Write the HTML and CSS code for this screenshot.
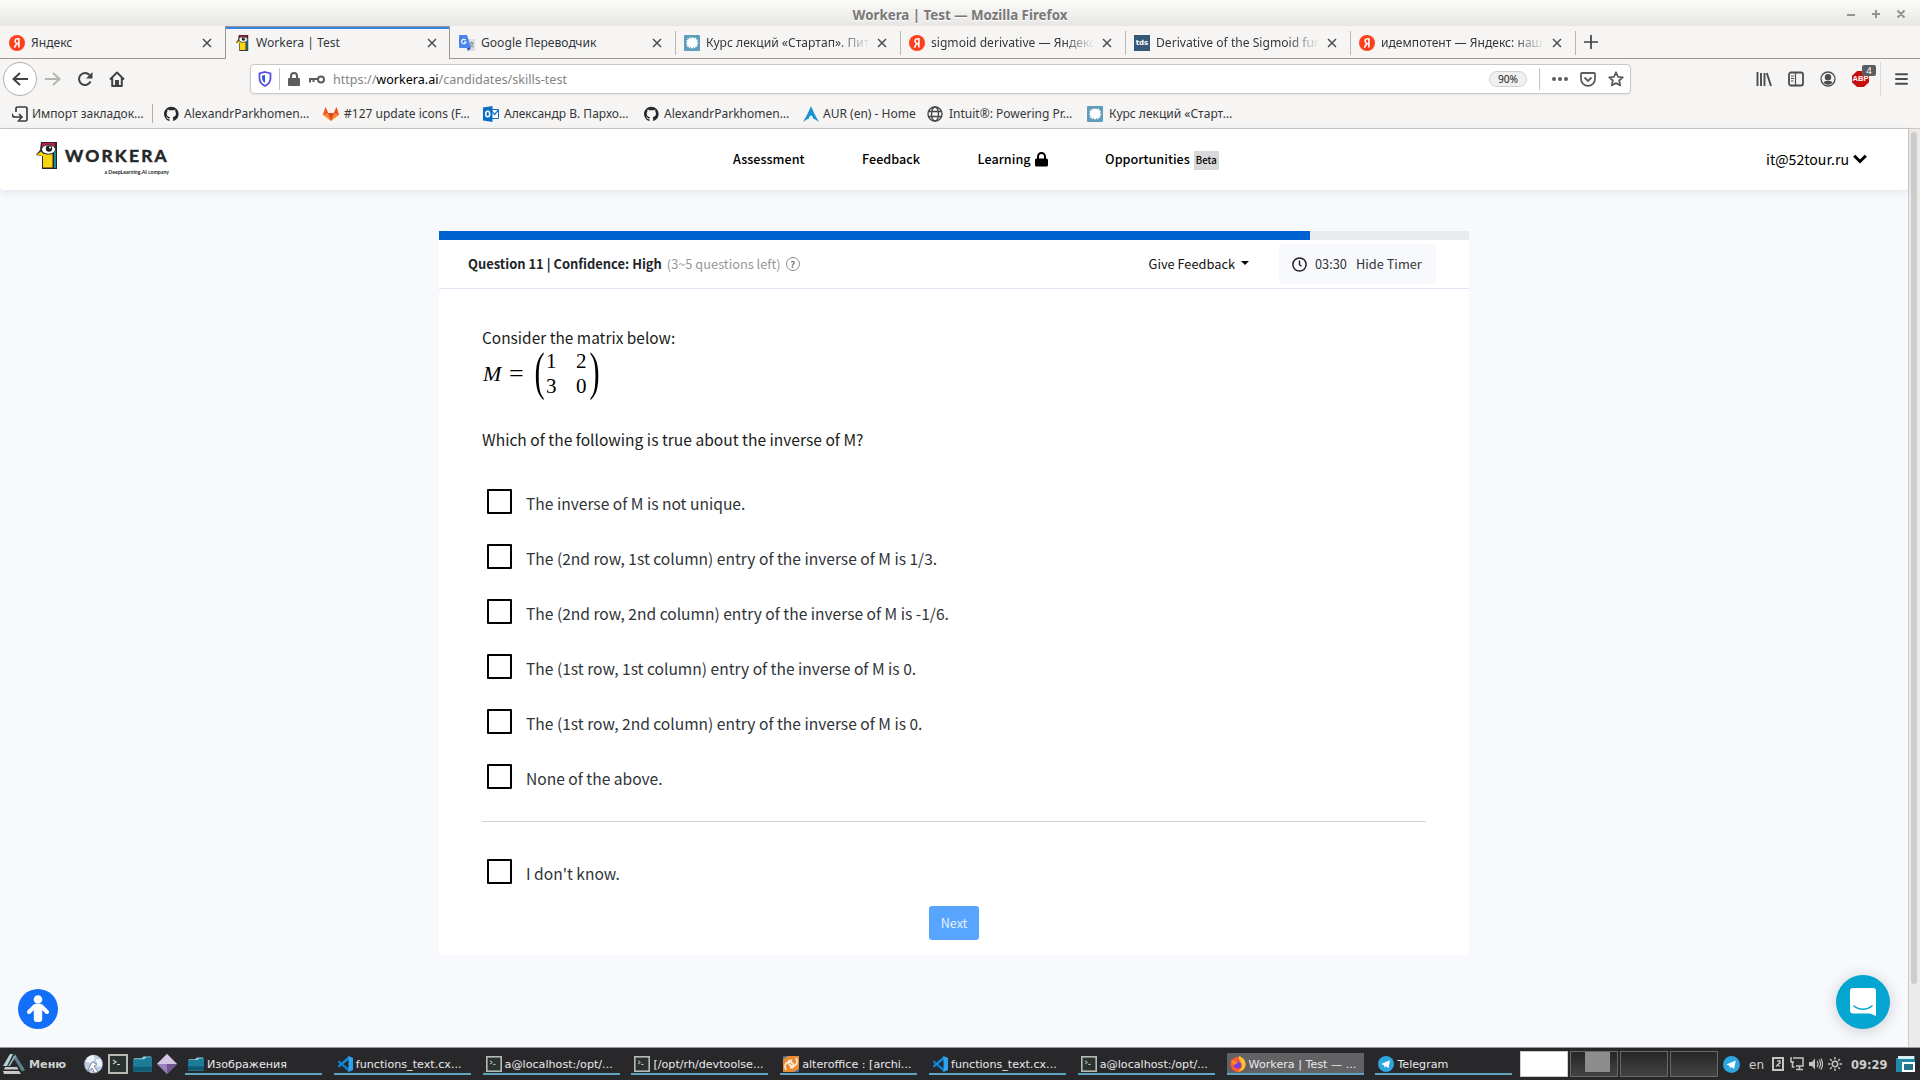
FILE: index.html
```html
<!DOCTYPE html>
<html lang="ru">
<head>
<meta charset="utf-8">
<title>Workera | Test</title>
<link rel="stylesheet" href="styles.css">
</head>
<body>
<svg class="defs" width="0" height="0">
  <symbol id="yandex" viewBox="0 0 16 16"><circle cx="8" cy="8" r="8" fill="#fc3f1d"/><path d="M9.900 12.600V3.700H8.600c-1.600 0-2.500.8-2.500 2.200 0 1.200.6 1.800 1.600 2.500L5.400 12.600M9.900 8.900H8.300" fill="none" stroke="#fff" stroke-width="1.600"/></symbol>
  <symbol id="bird" viewBox="0 0 21 27"><path d="M5 0h16v27H6V14L0 13l4-5z" fill="#23262b"/><path d="M6 1h13v4H6z" fill="#d6173c"/><path d="M7 12h9.500v13.500H7z" fill="#fbd50b"/><path d="M1 12.500l4-3 3 3v2z" fill="#fbd50b"/><path d="M18 6h2v20h-2z" fill="#1f8a90"/><ellipse cx="12.500" cy="7.500" rx="7" ry="4.700" fill="#fff" stroke="#23262b"/><circle cx="13" cy="6.500" r="3.200" fill="#222"/><circle cx="14" cy="5.600" r="1" fill="#fff"/></symbol>
  <symbol id="translate" viewBox="0 0 16 16"><path d="M6 4h10v12H8z" fill="#dadce0"/><path d="M1 0h7l4 13H1a1 1 0 0 1-1-1V1a1 1 0 0 1 1-1z" fill="#4a86ee"/><path d="M8 13h4l-3 3z" fill="#3055b8"/><path d="M6.600 5.200A2.200 2.200 0 1 0 7 7H5" fill="none" stroke="#fff" stroke-width="1.100"/><path d="M10.500 8h4M12.500 7v1M14 8c-.4 2-1.500 3-3 4M11.500 9.500l3 2.800" fill="none" stroke="#777f89"/></symbol>
  <symbol id="splat" viewBox="0 0 16 16"><rect width="16" height="16" rx="1" fill="#5f9dbd"/><path d="M3 3l2 1 1-2 1.500 1.500L9 2l1 1.500L12 2.500l.3 2L14 5l-1 2 1.500 1.500L13 9.500l.5 2-2 .3-.5 2L9.500 12 8 14l-1.300-2L5 13.500l-.3-2-2.200.3 1-2L2 8.500 3.300 7 2 5.500l2-.5z" fill="#fff"/></symbol>
  <symbol id="close" viewBox="0 0 10 10"><path d="M1 1l8 8M9 1L1 9" fill="none" stroke="#4a4d50" stroke-width="1.500"/></symbol>
  <symbol id="github" viewBox="0 -.5 17.500 17"><path fill="#24292e" d="M8 0C3.580 0 0 3.580 0 8c0 3.540 2.290 6.530 5.470 7.590.4.070.550-.170.550-.380 0-.190-.010-.820-.010-1.490-2.010.370-2.530-.490-2.690-.940-.090-.230-.480-.940-.820-1.130-.280-.150-.680-.520-.010-.530.630-.010 1.080.580 1.230.820.720 1.210 1.870.870 2.330.660.070-.520.280-.870.510-1.070-1.780-.2-3.640-.890-3.640-3.950 0-.870.310-1.590.820-2.150-.080-.2-.360-1.020.080-2.120 0 0 .670-.210 2.200.820.640-.180 1.320-.270 2-.270s1.360.090 2 .270c1.530-1.040 2.200-.820 2.200-.820.440 1.100.160 1.920.080 2.120.510.560.820 1.270.820 2.150 0 3.070-1.870 3.750-3.650 3.950.290.250.540.730.540 1.480 0 1.070-.010 1.930-.010 2.200 0 .210.150.460.550.380A8.010 8.010 0 0 0 16 8c0-4.420-3.580-8-8-8z"/></symbol>
  <symbol id="folder" viewBox="0 0 20 20"><path d="M1 4h8l2-2h8v16H1z" fill="#8fd0e2"/><path d="M0 5h12l2-2h6v15H0z" fill="#1d7b98"/><path d="M0 13h20v5H0z" fill="#0f5a75"/></symbol>
  <symbol id="term" viewBox="0 0 20 20"><rect x="1" y="1" width="18" height="18" fill="#2b3331" stroke="#b9b9b4" stroke-width="2"/><path d="M5 6l3 2-3 2M9 10.500h3" fill="none" stroke="#c9d2cf" stroke-width="1.200"/></symbol>
  <symbol id="code" viewBox="0 0 16 16"><path d="M1 5.200l1.200-.8L12 12.500V16L1 6.500z" fill="#0f7cc9"/><path d="M1 10.800l1.200.8L12 3.500V0L1 9.500z" fill="#1487d4"/><path d="M11.500 0L16 2v12l-4.500 2z" fill="#2aa3f1"/></symbol>
  <symbol id="tg" viewBox="0 0 18 18"><circle cx="9" cy="9" r="9" fill="#2ca5e0"/><path d="M3.500 9l10-4.200-1.700 9-3-2.200-1.500 1.500-.4-2.800z" fill="#fff"/></symbol>
</svg>

<header class="titlebar">
  <span class="titlebar-text">Workera | Test — Mozilla Firefox</span>
  <svg class="win-buttons" width="60" height="12" viewBox="0 0 60 12"><path d="M1 7h8M26 6h8M30 2v8M51.500 2.500l7 7M58.500 2.500l-7 7" fill="none" stroke="#939391" stroke-width="2"/></svg>
</header>

<div class="tabs">
  <div class="tab first"><svg class="fav"><use href="#yandex"/></svg><span class="tab-title">Яндекс</span><svg class="x"><use href="#close"/></svg></div>
  <div class="tab active"><svg class="fav"><use href="#bird"/></svg><span class="tab-title">Workera | Test</span><svg class="x"><use href="#close"/></svg></div>
  <div class="tab"><svg class="fav"><use href="#translate"/></svg><span class="tab-title">Google Переводчик</span><svg class="x"><use href="#close"/></svg></div>
  <div class="tab sep"><svg class="fav"><use href="#splat"/></svg><span class="tab-title fade">Курс лекций «Стартап». Пит</span><svg class="x"><use href="#close"/></svg></div>
  <div class="tab sep"><svg class="fav"><use href="#yandex"/></svg><span class="tab-title fade">sigmoid derivative — Яндекс</span><svg class="x"><use href="#close"/></svg></div>
  <div class="tab sep"><span class="fav tds">tds</span><span class="tab-title fade">Derivative of the Sigmoid fun</span><svg class="x"><use href="#close"/></svg></div>
  <div class="tab sep"><svg class="fav"><use href="#yandex"/></svg><span class="tab-title fade">идемпотент — Яндекс: наш</span><svg class="x"><use href="#close"/></svg></div>
  <div class="newtab sep"><svg width="14" height="14" viewBox="0 0 14 14"><path d="M7 0v14M0 7h14" stroke="#3d4145" stroke-width="1.700"/></svg></div>
</div>

<div class="toolbar">
  <div class="nav-buttons">
    <div class="back"><svg width="16" height="14" viewBox="0 0 16 14"><path d="M16 7H1.500M8 1L1.500 7 8 13" fill="none" stroke="#3f4347" stroke-width="2"/></svg></div>
    <svg class="fwd" width="16" height="14" viewBox="0 0 16 14"><path d="M0 7h14.500M8 1l6.500 6L8 13" fill="none" stroke="#b4b4b3" stroke-width="2"/></svg>
    <svg class="reload" width="16" height="16" viewBox="0 0 16 16"><path d="M13.500 10.500A6 6 0 1 1 12.500 4" fill="none" stroke="#3f4347" stroke-width="2"/><path d="M15.500 1v6.500H9z" fill="#3f4347"/></svg>
    <svg class="home" width="16" height="16" viewBox="0 0 16 16"><path d="M1 8.500L8 1.500l7 7M3.200 7v8h9.600V7" fill="none" stroke="#3f4347" stroke-width="2" stroke-linejoin="round"/><path d="M6 9h4v6H6z" fill="#3f4347"/></svg>
  </div>
  <div class="urlbar">
    <svg class="shield" width="14" height="16" viewBox="0 0 14 16"><path d="M7 1l5.500 1.500V7c0 4-2.500 6.500-5.500 8-3-1.500-5.500-4-5.500-8V2.500z" fill="none" stroke="#5b50e0" stroke-width="1.800"/><path d="M7 4v8c-1.800-1-3-3-3-5V4.500z" fill="#3a57d8"/></svg>
    <i class="vr"></i>
    <svg class="lock" width="12" height="14" viewBox="0 0 12 14"><path d="M3 7V4a3 3 0 0 1 6 0v3" fill="none" stroke="#5c5c5c" stroke-width="2"/><rect y="6" width="12" height="8" rx="1" fill="#5c5c5c"/></svg>
    <svg class="key" width="16" height="9" viewBox="0 0 16 9"><circle cx="12" cy="4.500" r="3" fill="none" stroke="#5c5c5c" stroke-width="2"/><path d="M9 4H0M1 4v3.500M4.500 4v3" fill="none" stroke="#5c5c5c" stroke-width="2"/></svg>
    <span class="url">https://<b>workera.ai</b>/candidates/skills-test</span>
    <span class="zoom">90%</span>
    <i class="vr"></i>
    <svg class="dots" width="16" height="4" viewBox="0 0 16 4"><path d="M2 2h0M8 2h0M14 2h0" stroke="#5c5c5c" stroke-width="4" stroke-linecap="round"/></svg>
    <svg class="pocket" width="16" height="15" viewBox="0 0 16 15"><path d="M2 1h12a1 1 0 0 1 1 1v5a7 6.800 0 0 1-14 0V2a1 1 0 0 1 1-1z" fill="none" stroke="#5c5c5c" stroke-width="1.800"/><path d="M4.500 5.500L8 9l3.500-3.500" fill="none" stroke="#5c5c5c" stroke-width="1.800"/></svg>
    <svg class="star" width="16" height="16" viewBox="0 0 16 16"><path d="M8 1.300l2 4.500 4.800.5-3.600 3.200 1 4.900L8 12l-4.200 2.400 1-4.900L1.200 6.300 6 5.800z" fill="none" stroke="#5c5c5c" stroke-width="1.800" stroke-linejoin="round"/></svg>
  </div>
  <div class="tool-buttons">
    <svg width="16" height="16" viewBox="0 0 16 16"><path d="M1.500 1v14M5 2v13M8.500 2v13M10.800 2l4.200 13" fill="none" stroke="#4a4d50" stroke-width="1.900"/></svg>
    <svg width="16" height="16" viewBox="0 0 16 16"><rect x="1" y="1.500" width="14" height="13" rx="2" fill="none" stroke="#4a4d50" stroke-width="1.800"/><path d="M7.500 2v12M3 5h3M3 7.500h3M3 10h2.500" stroke="#4a4d50" stroke-width="1.200"/></svg>
    <svg width="16" height="16" viewBox="0 0 16 16"><circle cx="8" cy="8" r="7" fill="none" stroke="#4a4d50" stroke-width="1.300"/><circle cx="8" cy="6.200" r="3.200" fill="#4a4d50"/><path d="M3.500 11.500C5 9.500 6.500 10 8 10s3 -.5 4.500 1.500A5.600 5.600 0 0 1 3.500 11.500z" fill="#4a4d50"/></svg>
    <span class="abp"><span class="abp-sign">ABP</span><span class="abp-badge">4</span></span>
    <i class="vr tall"></i>
    <svg class="burger" width="14" height="12" viewBox="0 0 14 12"><path d="M1 1.200h11M1 6h11M1 10.800h11" stroke="#4a4d50" stroke-width="2" stroke-linecap="round"/></svg>
  </div>
</div>

<nav class="bookmarks">
  <div class="bm"><svg class="fav" viewBox="0 0 16 16"><path d="M4 6V2.500A1.500 1.500 0 0 1 5.500 1h8A1.500 1.500 0 0 1 15 2.500v11a1.500 1.500 0 0 1-1.500 1.500h-8M0 7.500C0 10 1 11 3 11h6M7 8l3 3-3 3" fill="none" stroke="#3a3d40" stroke-width="1.700"/></svg><span>Импорт закладок…</span></div>
  <i class="vr"></i>
  <div class="bm"><svg class="fav"><use href="#github"/></svg><span>AlexandrParkhomen…</span></div>
  <div class="bm g5"><svg class="fav" viewBox="0 0 16 16"><path d="M0 9l2.500-8 2.700 6h5.600l2.700-6L16 9l-8 6z" fill="#fc8a2b"/><path d="M5 7h6l-3 8z" fill="#e24329"/><path d="M0 9l2.500-8 2.700 6zM16 9l-2.500-8-2.700 6z" fill="#f0522c"/></svg><span>#127 update icons (F…</span></div>
  <div class="bm g5"><svg class="fav" viewBox="0 0 16 16"><path d="M8 3.500h7.500v9H8" fill="#fff" stroke="#0a6fc4"/><path d="M9 5l2.500 3.500L15.500 4" fill="none" stroke="#0a6fc4" stroke-width="1.200"/><path d="M0 1.500L9.500 0v16L0 14.500z" fill="#0a6fc4"/><ellipse cx="4.700" cy="8" rx="2" ry="2.800" fill="none" stroke="#fff" stroke-width="1.500"/></svg><span>Александр В. Пархо…</span></div>
  <div class="bm"><svg class="fav"><use href="#github"/></svg><span>AlexandrParkhomen…</span></div>
  <div class="bm"><svg class="fav" viewBox="0 0 16 16"><path d="M8 0c2 5 4.500 10 8 16-2.500-2-4.500-3-6-3.500 0-2-1-3-2-3s-2 1-2 3C4.500 13 2.500 14 0 16 3.500 10 6 5 8 0z" fill="#1793d1"/></svg><span>AUR (en) - Home</span></div>
  <div class="bm g6"><svg class="fav" viewBox="0 0 16 16"><g fill="none" stroke="#45484b" stroke-width="1.400"><circle cx="8" cy="8" r="7"/><ellipse cx="8" cy="8" rx="3.500" ry="7"/><path d="M1.500 5.500h13M1.500 10.500h13"/></g></svg><span>Intuit®: Powering Pr…</span></div>
  <div class="bm g6"><svg class="fav"><use href="#splat"/></svg><span>Курс лекций «Старт…</span></div>
</nav>

<div class="viewport">
  <main class="page">
    <header class="site-nav">
      <div class="brand">
        <svg class="brand-bird" width="21" height="27"><use href="#bird"/></svg>
        <div class="brand-words"><span class="brand-name">WORKERA</span><span class="brand-sub">a DeepLearning.AI company</span></div>
      </div>
      <div class="links">
        <a>Assessment</a>
        <a>Feedback</a>
        <a class="with-icon">Learning<svg width="13" height="15" viewBox="0 0 13 15"><path d="M3 7V4.500a3.500 3.500 0 0 1 7 0V7" fill="none" stroke="#000" stroke-width="2"/><rect y="6.500" width="13" height="8" rx="1.500"/></svg></a>
        <a class="with-icon">Opportunities<span class="beta">Beta</span></a>
      </div>
      <div class="account">it@52tour.ru<svg width="14" height="10" viewBox="0 0 14 10"><path d="M1.200 1.700L7 7.500l5.800-5.800" fill="none" stroke="#000" stroke-width="3"/></svg></div>
    </header>

    <section class="card">
      <div class="progress"><div class="progress-fill"></div></div>
      <div class="card-head">
        <span class="q-title">Question 11 | Confidence: High</span>
        <span class="q-left">(3~5 questions left)</span>
        <span class="help">?</span>
        <span class="give">Give Feedback</span>
        <i class="caret"></i>
        <div class="timer">
          <svg width="15" height="15" viewBox="0 0 15 15"><circle cx="7.500" cy="7.500" r="6.600" fill="none" stroke="#222" stroke-width="1.500"/><path d="M7.500 3.500v4.200l2 1.600" fill="none" stroke="#222" stroke-width="1.400"/></svg>
          <span class="time">03:30</span><span>Hide Timer</span>
        </div>
      </div>
      <div class="card-body">
        <p class="prompt first-line">Consider the matrix below:</p>
        <div class="math"><i class="var">M</i><span class="eq">=</span><span class="paren">(</span><span class="matrix"><span>1</span><span>2</span><span>3</span><span>0</span></span><span class="paren">)</span></div>
        <p class="prompt">Which of the following is true about the inverse of M?</p>
        <div class="options">
          <label class="option"><i class="box"></i><span>The inverse of M is not unique.</span></label>
          <label class="option"><i class="box"></i><span>The (2nd row, 1st column) entry of the inverse of M is 1/3.</span></label>
          <label class="option"><i class="box"></i><span>The (2nd row, 2nd column) entry of the inverse of M is -1/6.</span></label>
          <label class="option"><i class="box"></i><span>The (1st row, 1st column) entry of the inverse of M is 0.</span></label>
          <label class="option"><i class="box"></i><span>The (1st row, 2nd column) entry of the inverse of M is 0.</span></label>
          <label class="option"><i class="box"></i><span>None of the above.</span></label>
        </div>
        <div class="unknown"><label class="option"><i class="box"></i><span>I don't know.</span></label></div>
        <button class="next">Next</button>
      </div>
    </section>

    <div class="a11y"><svg width="22" height="28" viewBox="0 0 22 28"><circle cx="11" cy="4.500" r="4.300" fill="#fff"/><path d="M2 17l6-6h6l6 6" fill="none" stroke="#fff" stroke-width="4" stroke-linecap="round" stroke-linejoin="round"/><rect x="6.800" y="9.500" width="8.400" height="17.500" rx="3" fill="#fff"/></svg></div>
    <div class="chat"><svg width="26" height="28" viewBox="0 0 26 28"><path d="M3 0h20a3 3 0 0 1 3 3v25l-6-2.500H3a3 3 0 0 1-3-3V3a3 3 0 0 1 3-3z" fill="#fff"/><path d="M4 18c5 4.300 13 4.300 18 0" fill="none" stroke="#05a5d1" stroke-width="1.600" stroke-linecap="round"/></svg></div>
  </main>
  <div class="scrollbar"><div class="thumb"></div></div>
</div>

<footer class="taskbar">
  <div class="menu"><svg width="22" height="20" viewBox="0 0 22 20"><path d="M7 0h3L4 12H0z" fill="#b9d3da"/><path d="M12 0l10 16-3 1.500L10 3z" fill="#5d818c"/><path d="M11 2h2l-6 10H5z" fill="#8fb4be"/><path d="M2 13h12l1.500 2.500H1zM0 17h16l2 3H1z" fill="#c9c9c9"/></svg><span>Меню</span></div>
  <div class="launch">
    <svg width="19" height="20" viewBox="0 0 19 20"><circle cx="9.500" cy="10" r="9.300" fill="#b9cde6"/><path d="M4 3l5-2 2 4-4 4-5-1zM12 5l5 0 1 7-5 1z" fill="#eef3fa"/><path d="M3 18l5-10 5 2-3 2 4 6-3 1-3-5z" fill="#fff" stroke="#667" stroke-width=".7"/></svg>
    <svg width="20" height="20"><use href="#term"/></svg>
    <svg width="19" height="20"><use href="#folder"/></svg>
    <svg width="20" height="20" viewBox="0 0 20 20"><path d="M10 0l10 10-10 10L0 10z" fill="#9a80bd"/><path d="M10 0l10 10H0z" fill="#d3c5e4"/><path d="M10 10h10L10 20z" fill="#6f5793"/></svg>
  </div>
  <div class="tasks">
    <div class="task"><svg><use href="#folder"/></svg><span>Изображения</span></div>
    <div class="task"><svg><use href="#code"/></svg><span>functions_text.cx...</span></div>
    <div class="task"><svg><use href="#term"/></svg><span>a@localhost:/opt/...</span></div>
    <div class="task"><svg><use href="#term"/></svg><span>[/opt/rh/devtoolse...</span></div>
    <div class="task"><svg viewBox="0 0 16 16"><rect width="16" height="16" fill="#e98b35"/><path d="M3 14c-3-6 2-10 6-7s0 6-2 4M13 2c3 6-2 10-6 7s0-6 2-4" fill="none" stroke="#ffeedb" stroke-width="1.600"/><path d="M0 0h5L0 3zM16 16h-5l5-3z" fill="#3e6fae"/></svg><span>alteroffice : [archi...</span></div>
    <div class="task"><svg><use href="#code"/></svg><span>functions_text.cx...</span></div>
    <div class="task"><svg><use href="#term"/></svg><span>a@localhost:/opt/...</span></div>
    <div class="task current"><svg viewBox="0 0 16 16"><circle cx="8" cy="8.500" r="7.500" fill="#ff5a30"/><path d="M9 0c5 2 7 5 6.500 10-1 3-4 5.500-7.500 5.500 4-3 5-6 3-9C9.500 4.500 8.500 2.500 9 0z" fill="#ffc52e"/><circle cx="7.500" cy="9" r="3.500" fill="#7a3ee0"/><path d="M1 4l3 1 4 1-2 2-3 1z" fill="#ff8a22"/></svg><span>Workera | Test — ...</span></div>
    <div class="task"><svg><use href="#tg"/></svg><span>Telegram</span></div>
  </div>
  <div class="pager"><i class="on"></i><i><b></b></i><i></i><i></i></div>
  <div class="tray">
    <svg class="t-tg" width="17" height="17"><use href="#tg"/></svg>
    <span class="lang">en</span>
    <svg class="t-clip" width="12" height="14" viewBox="0 0 12 14"><rect x="1" y="1" width="10" height="12" fill="none" stroke="#c4c4c4" stroke-width="2"/><path d="M4 9.500l4-4M8 9.500L5 7.500M5 4h3v3" fill="none" stroke="#c4c4c4" stroke-width="1.300"/></svg>
    <svg class="t-net" width="14" height="14" viewBox="0 0 14 14"><path d="M3 1h10v8H6M9.500 9v3M6 12.500h7M1 0v5h3M2.500 5v5h2" fill="none" stroke="#c4c4c4" stroke-width="1.500"/></svg>
    <svg class="t-vol" width="14" height="14" viewBox="0 0 14 14"><path d="M0 5h3l3-3.500v11L3 9H0z" fill="#c4c4c4"/><path d="M8 4q2 3 0 6M10 2.500q3 4.500 0 9M12 1.500q3 5.500 0 11" fill="none" stroke="#c4c4c4" stroke-width="1.200"/></svg>
    <svg class="t-sun" width="14" height="14" viewBox="0 0 14 14"><circle cx="7" cy="7" r="2.700" fill="none" stroke="#c4c4c4" stroke-width="1.500"/><path d="M7 0v2.500M7 11.500V14M0 7h2.500M11.500 7H14M2 2l1.700 1.700M10.300 10.300L12 12M12 2l-1.700 1.700M3.700 10.300L2 12" stroke="#c4c4c4" stroke-width="1.400"/></svg>
    <span class="clock">09:29</span>
    <svg class="t-show" width="21" height="18" viewBox="0 0 21 18"><path d="M1 3h9l2-2h8v16H1z" fill="#2389a8"/><path d="M3 1h16v3H3z" fill="#d7eef4"/><rect x="8" y="8" width="11" height="8" fill="#24748c" stroke="#fff" stroke-width="2"/></svg>
  </div>
</footer>
</body>
</html>
```
FILE: styles.css
```css
* { box-sizing: border-box; }
body {
  margin: 0; width: 1920px; height: 1080px; overflow: hidden;
  display: flex; flex-direction: column;
  background: #f6f5f4; color: #33373a;
  font-family: "Noto Sans", sans-serif; font-size: 12.1px;
}
.defs { position: absolute; }
svg { flex: none; display: block; }
p { margin: 0; }
i { font-style: normal; }

.titlebar {
  height: 26px; flex: none; display: grid; grid-template-columns: 1fr auto 1fr; align-items: center;
  background: linear-gradient(#fbfbfa, #e7e6e4); padding-top: 3px;
}
.titlebar-text { grid-column: 2; font-weight: 700; font-size: 13.32px; line-height: 20px; color: #787876; text-shadow: 0 1px #fff; }
.win-buttons { justify-self: end; margin: -2px 14px 0 0; }

.tabs { height: 33px; flex: none; display: flex; }
.tab { width: 225px; height: 33px; display: flex; align-items: center; padding: 1px 0 0 9px; border-bottom: 1px solid #999895; }
.fav { width: 16px; height: 16px; flex: none; }
.tab-title { margin-left: 6px; width: 166px; white-space: nowrap; line-height: 18px; }
.fade { -webkit-mask-image: linear-gradient(90deg, #000 132px, transparent 164px); mask-image: linear-gradient(90deg, #000 132px, transparent 164px); }
.x { width: 10px; height: 10px; margin-left: 5px; }
.active { border: 1px solid #999895; border-bottom: 0; padding: 0 0 0 8px; box-shadow: inset 0 2px #3584e4; }
.sep { background: linear-gradient(#b9b6b3, #b9b6b3) 0 5px / 1px 24px no-repeat; }
.newtab { flex: 1; border-bottom: 1px solid #999895; display: flex; align-items: center; padding-left: 9px; }
.tds { background: #355876; color: #fff; font: 700 7px/16px "DejaVu Sans", sans-serif; text-align: center; }

.toolbar { height: 40px; flex: none; display: flex; align-items: center; }
.nav-buttons { width: 250px; display: flex; align-items: center; padding-left: 3px; }
.back { width: 34px; height: 34px; border: 1px solid #b2afac; border-radius: 50%; background: #fff; display: flex; align-items: center; justify-content: center; }
.fwd { margin-left: 8px; }
.reload { margin-left: 16px; }
.home { margin-left: 16px; }
.urlbar {
  width: 1381px; height: 30px; display: flex; align-items: center; background: #fff;
  border: 1px solid #cdc7c2; border-radius: 4px; box-shadow: 0 1px 3px rgba(0, 0, 0, .06); padding-left: 7px;
}
.vr { width: 1px; height: 22px; background: #c6c3c0; flex: none; }
.shield { margin-right: 7px; }
.lock { margin-left: 8px; }
.key { margin-left: 9px; }
.url { margin-left: 8px; flex: 1; font-size: 12.58px; line-height: 20px; padding-top: 1px; color: #828384; }
.url b { font-weight: 400; color: #000; }
.zoom { width: 38px; height: 16px; border: 1px solid #cfcfcf; border-radius: 8px; background: #f0f0f0; font-size: 10.2px; line-height: 14px; text-align: center; margin-right: 12px; color: #222; }
.dots { margin-left: 12px; }
.pocket { margin-left: 12px; }
.star { margin: 0 6px 0 12px; }
.tool-buttons { flex: 1; display: flex; align-items: center; gap: 16px; padding-left: 125px; }
.abp { position: relative; width: 16px; height: 16px; }
.abp-sign {
  display: block; width: 17px; height: 16px; background: #c70d0d; color: #fff;
  clip-path: polygon(30% 0, 70% 0, 100% 30%, 100% 70%, 70% 100%, 30% 100%, 0 70%, 0 30%);
  font: 700 7.600px/16px "Liberation Sans", sans-serif; text-align: center;
}
.abp-badge { position: absolute; left: 10px; top: -6px; width: 14px; height: 11px; border-radius: 2px; background: #5b5e60; color: #fff; font-size: 9.500px; line-height: 11px; text-align: center; }
.tall { height: 34px; margin-left: -4px; background: #dcdad8; }
.burger { margin-left: -2px; }

.bookmarks {
  height: 30px; flex: none; border-bottom: 1px solid #cdc7c2; padding-left: 12px; font-size: 12.030px; line-height: 18px;
  display: grid; grid-template-columns: 140px 12px 159px 160px 161px 159px 124px 160px auto; align-items: center;
}
.bookmarks .vr { height: 19px; background: #b0adaa; }
.bm { display: flex; align-items: center; gap: 4px; white-space: nowrap; }
.g5 { gap: 5px; }
.g6 { gap: 6px; }

.viewport { height: 918px; flex: none; display: flex; }
.page { width: 1908px; position: relative; background: #f8f9fd; font-family: "Noto Sans CJK SC", "Noto Sans", sans-serif; }
.scrollbar { flex: 1; background: #edebe9; border-left: 1px solid #cdc9c6; padding: 3px 0 0 2px; }
.thumb { width: 6px; height: 852px; border-radius: 3px; background: #cfcdcb; }

.site-nav { height: 61px; background: #fff; border-radius: 0 0 4px 4px; box-shadow: 0 2px 8px rgba(40, 50, 90, .1); display: flex; color: #000; }
.brand { width: 733px; padding: 13px 0 0 36px; display: flex; }
.brand-words { margin-left: 8px; padding-top: 4px; width: 106px; display: flex; flex-direction: column; font-family: Lato, sans-serif; font-weight: 700; color: #26262a; }
.brand-name { font-size: 17.400px; line-height: 20px; letter-spacing: 2.200px; -webkit-text-stroke: .5px #26262a; }
.brand-sub { font-size: 5.200px; line-height: 8px; text-align: right; padding: 2px 2px 0 0; }
.links { display: flex; gap: 57.500px; font-weight: 500; font-size: 12.650px; line-height: 60px; height: 60px; width: 1033px; }
.with-icon { display: flex; align-items: center; gap: 4px; }
.beta { background: #d8d8d8; width: 25px; height: 19px; font-size: 9.600px; line-height: 19px; text-align: center; margin-top: 2px; }
.account { display: flex; align-items: center; gap: 4px; font-size: 14.110px; line-height: 60px; height: 60px; }

.card { width: 1030px; margin: 41px 0 0 439px; height: 723.500px; background: #fff; }
.progress { height: 9px; background: #e9ecef; }
.progress-fill { width: 871px; height: 9px; background: #0062d1; }
.card-head { height: 49px; border-bottom: 1px solid #dfe5f2; display: flex; align-items: center; padding-left: 29px; font-size: 12.800px; line-height: 20px; }
.q-title { font-weight: 700; font-size: 12.930px; color: #212529; }
.q-left { margin-left: 5px; color: #979797; }
.help { margin-left: 5px; width: 14px; height: 14px; border: 1px solid #8c8c8c; border-radius: 50%; font-size: 9.500px; line-height: 12px; font-weight: 700; text-align: center; color: #777; }
.give { margin-left: auto; color: #111; }
.caret { margin: -3px 30px 0 6px; border: 4px solid transparent; border-top-color: #000; border-bottom: 0; }
.timer { width: 157px; height: 40px; margin-right: 33px; background: #f8f9fd; border-radius: 4px; display: flex; align-items: center; padding-left: 13px; color: #333; }
.time { margin: 0 9px 0 8px; }
.card-body { padding: 35px 43px 0; color: #212529; display: flex; flex-direction: column; }
.prompt { font-size: 15.580px; line-height: 26px; color: #1b1d20; }
.first-line { font-size: 15.440px; }
.math { height: 76px; padding: 0 0 29px 1px; display: flex; align-items: center; font: 21px/25px "Liberation Serif", serif; color: #000; }
.var { width: 26px; font-style: italic; font-size: 22px; }
.eq { width: 25px; font-size: 26px; }
.paren { width: 11px; height: 20px; line-height: 18px; text-align: center; transform: scale(1.450, 2.550); }
.matrix { display: grid; grid-template: 24.500px 24.500px / 30px 12px; margin: 0 1px 0 1px; }
.options { padding: 37px 0 32px; display: flex; flex-direction: column; gap: 30px; }
.option { display: flex; height: 25px; margin-left: 5px; gap: 14px; font-size: 15.580px; line-height: 28px; color: #303438; white-space: nowrap; }
.box { width: 25px; height: 25px; flex: none; border: 2px solid #000; border-radius: 1px; }
.unknown { border-top: 1px solid #d2d2d2; width: 944px; padding: 37px 0 22px; }
.next { width: 50px; height: 34px; align-self: center; padding: 0; border: 0; border-radius: 3px; background: #57a5ff; color: #e7f2ff; font: 12.600px/34px "Noto Sans CJK SC", sans-serif; }

.a11y { position: absolute; left: 18px; top: 860px; width: 40px; height: 40px; border-radius: 50%; background: #146ff8; display: flex; align-items: center; justify-content: center; }
.chat { position: absolute; left: 1836px; top: 846px; width: 54px; height: 54px; border-radius: 50%; background: #05a5d1; box-shadow: 0 2px 16px rgba(0, 0, 0, .18); display: flex; align-items: center; justify-content: center; }

.taskbar {
  height: 33px; flex: none; display: flex; background: #28282a; border-top: 1px solid #9b9a98;
  font: 11.150px/16px "DejaVu Sans", sans-serif; color: #eaeaea; align-items: center;
}
.menu { width: 84px; padding-left: 3px; display: flex; align-items: center; gap: 4px; font-weight: 700; color: #cfcfcf; }
.menu span, .clock, .lang { padding-top: 1px; }
.launch { width: 101px; display: flex; gap: 5px; }
.tasks { width: 1335px; display: flex; gap: 11.800px; }
.task { width: 137px; height: 22px; display: flex; align-items: center; gap: 3px; padding: 2px 0 0 3px; border-bottom: 2px solid #5fa4be; white-space: nowrap; }
.task span { padding-top: 1px; }
.task svg { width: 16px; height: 16px; }
.current { background: #626264; }
.pager { display: flex; gap: 2px; width: 203px; }
.pager i { width: 48px; height: 26px; border: 1px solid #6a6a6a; background: linear-gradient(#262626, #434343); }
.pager .on { background: #fff; border-color: #ccc; }
.pager b { display: block; width: 25px; height: 20px; margin-left: 14px; background: #8d8d8d; }
.tray { display: flex; align-items: center; font-weight: 700; color: #cfcfcf; }
.lang { margin-left: 9px; width: 16px; font-weight: 400; font-size: 12px; }
.t-clip { margin-left: 7px; }
.t-net { margin-left: 6px; }
.t-vol { margin-left: 5px; }
.t-sun { margin-left: 5px; }
.clock { margin: 0 7px 0 9px; font-size: 11.470px; }
```
